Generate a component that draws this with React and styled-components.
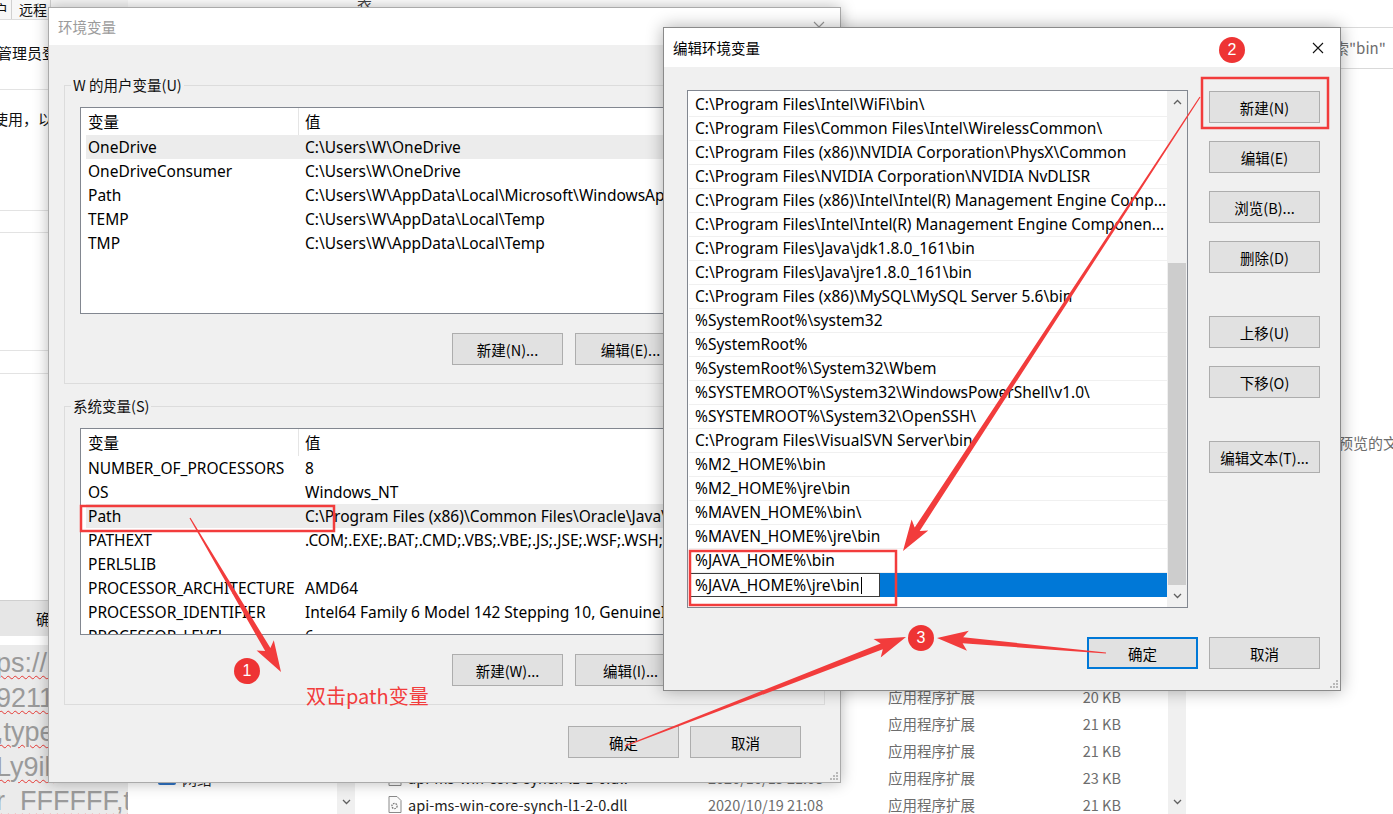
import React from 'react';
import styled, { createGlobalStyle } from 'styled-components';

const UI = '"Noto Sans", "Noto Sans CJK SC", sans-serif';
const CJK = '"Noto Sans CJK SC", "Noto Sans", sans-serif';

const GlobalStyle = createGlobalStyle`
  html, body { margin: 0; padding: 0; overflow: hidden; background: #fff; }
  body { font-family: ${UI}; font-size: 15.5px; color: #000; }
  * { box-sizing: border-box; }
`;

const userVars = [
  ['OneDrive', 'C:\\Users\\W\\OneDrive'],
  ['OneDriveConsumer', 'C:\\Users\\W\\OneDrive'],
  ['Path', 'C:\\Users\\W\\AppData\\Local\\Microsoft\\WindowsApps;'],
  ['TEMP', 'C:\\Users\\W\\AppData\\Local\\Temp'],
  ['TMP', 'C:\\Users\\W\\AppData\\Local\\Temp'],
];

const sysVars = [
  ['NUMBER_OF_PROCESSORS', '8'],
  ['OS', 'Windows_NT'],
  ['Path', 'C:\\Program Files (x86)\\Common Files\\Oracle\\Java\\javapath;'],
  ['PATHEXT', '.COM;.EXE;.BAT;.CMD;.VBS;.VBE;.JS;.JSE;.WSF;.WSH;.MSC'],
  ['PERL5LIB', ''],
  ['PROCESSOR_ARCHITECTURE', 'AMD64'],
  ['PROCESSOR_IDENTIFIER', 'Intel64 Family 6 Model 142 Stepping 10, GenuineIntel'],
  ['PROCESSOR_LEVEL', '6'],
];

const paths = [
  'C:\\Program Files\\Intel\\WiFi\\bin\\',
  'C:\\Program Files\\Common Files\\Intel\\WirelessCommon\\',
  'C:\\Program Files (x86)\\NVIDIA Corporation\\PhysX\\Common',
  'C:\\Program Files\\NVIDIA Corporation\\NVIDIA NvDLISR',
  'C:\\Program Files (x86)\\Intel\\Intel(R) Management Engine Comp...',
  'C:\\Program Files\\Intel\\Intel(R) Management Engine Componen...',
  'C:\\Program Files\\Java\\jdk1.8.0_161\\bin',
  'C:\\Program Files\\Java\\jre1.8.0_161\\bin',
  'C:\\Program Files (x86)\\MySQL\\MySQL Server 5.6\\bin',
  '%SystemRoot%\\system32',
  '%SystemRoot%',
  '%SystemRoot%\\System32\\Wbem',
  '%SYSTEMROOT%\\System32\\WindowsPowerShell\\v1.0\\',
  '%SYSTEMROOT%\\System32\\OpenSSH\\',
  'C:\\Program Files\\VisualSVN Server\\bin',
  '%M2_HOME%\\bin',
  '%M2_HOME%\\jre\\bin',
  '%MAVEN_HOME%\\bin\\',
  '%MAVEN_HOME%\\jre\\bin',
  '%JAVA_HOME%\\bin',
];

const files = [
  { name: '', date: '', size: '20 KB' },
  { name: '', date: '', size: '21 KB' },
  { name: '', date: '', size: '21 KB' },
  { name: 'api-ms-win-core-synch-l1-1-0.dll', date: '2020/10/19 21:08', size: '23 KB' },
  { name: 'api-ms-win-core-synch-l1-2-0.dll', date: '2020/10/19 21:08', size: '21 KB' },
];

const pads = ['ps://im', '92117', ',type', 'Ly9ib', 'r_FFFFFF,t_7'];

function CloseIcon({ color }) {
  return (
    <svg width="12" height="12" viewBox="0 0 12 12">
      <path d="M1 1L11 11M11 1L1 11" stroke={color} strokeWidth="1.1" fill="none" />
    </svg>
  );
}

function Chevron({ up }) {
  return (
    <svg width="9" height="6" viewBox="0 0 9 6">
      <path d={up ? 'M1 5L4.5 1.5L8 5' : 'M1 1L4.5 4.5L8 1'} stroke="#606060" strokeWidth="1.3" fill="none" />
    </svg>
  );
}

function Grip() {
  return (
    <svg width="10" height="10" viewBox="0 0 10 10">
      {[[8, 2], [8, 5], [5, 5], [8, 8], [5, 8], [2, 8]].map(([x, y]) => (
        <rect key={`${x}${y}`} x={x - 1} y={y - 1} width="2" height="2" fill="#b8b8b8" />
      ))}
    </svg>
  );
}

function DllIcon() {
  return (
    <svg width="14" height="17" viewBox="0 0 14 17">
      <path d="M1 .5h8l4 4v12H1z" fill="#fafafa" stroke="#8a8a8a" />
      <circle cx="6.5" cy="10" r="2.6" fill="none" stroke="#7a7a7a" strokeWidth="1.3" strokeDasharray="1.6 1" />
    </svg>
  );
}

function arrow(x1, y1, x2, y2, tail = 0.6, neck = 3, headW = 10, headL = 26) {
  const len = Math.hypot(x2 - x1, y2 - y1);
  const dx = (x2 - x1) / len;
  const dy = (y2 - y1) / len;
  const nx = -dy;
  const ny = dx;
  const Nx = x2 - dx * headL;
  const Ny = y2 - dy * headL;
  const pts = [
    [x1 + nx * tail, y1 + ny * tail],
    [Nx + nx * neck, Ny + ny * neck],
    [Nx - dx * 5 + nx * headW, Ny - dy * 5 + ny * headW],
    [x2, y2],
    [Nx - dx * 5 - nx * headW, Ny - dy * 5 - ny * headW],
    [Nx - nx * neck, Ny - ny * neck],
    [x1 - nx * tail, y1 - ny * tail],
  ];
  return pts.map((p) => p.map((v) => v.toFixed(1)).join(',')).join(' ');
}

export default function App() {
  return (
    <Scene>
      <GlobalStyle />

      <SettingsWindow>
        <TabStrip>
          <Tab $cut>户</Tab>
          <Tab>远程</Tab>
        </TabStrip>
        <SettingsText $top={22}>管理员登录</SettingsText>
        <SettingsRule $top={25} />
        <SettingsText $top={18} $indent={-7}>使用，以</SettingsText>
        <SettingsRule $top={80} />
        <SettingsRule $top={21} />
        <SettingsRule $top={117} />
        <SettingsRule $top={22} />
        <SettingsFooter>确定</SettingsFooter>
      </SettingsWindow>

      <NotePad>
        {pads.map((t) => (
          <PadLine key={t}>{t}</PadLine>
        ))}
      </NotePad>

      <Explorer>
        <ExplorerTop>
          <Ribbon>表</Ribbon>
          <SearchBox>搜索"bin"</SearchBox>
        </ExplorerTop>
        <ExplorerBody>
          <NavPane>
            <NavItem>
              <NetIcon />
              网络
            </NavItem>
            <VScroll>
              <Chevron />
            </VScroll>
          </NavPane>
          <FileList>
            {files.map((f, i) => (
              <FileRow key={i}>
                <FileName>
                  {f.name && <DllIcon />}
                  {f.name}
                </FileName>
                <FileDate>{f.date}</FileDate>
                <FileType>应用程序扩展</FileType>
                <FileSize>{f.size}</FileSize>
              </FileRow>
            ))}
          </FileList>
          <VScroll>
            <Chevron />
          </VScroll>
          <Preview>选择要预览的文件。</Preview>
        </ExplorerBody>
      </Explorer>

      <EnvDialog>
        <TitleBar $h={37}>
          <Title $inactive>环境变量</Title>
          <CloseBox $inactive>
            <CloseIcon color="#999" />
          </CloseBox>
        </TitleBar>
        <EnvBody>
          <Group $first>
            <Legend>W 的用户变量(U)</Legend>
            <VarList>
              <VarHeader>
                <NameCol>变量</NameCol>
                <ValueCol $head>值</ValueCol>
              </VarHeader>
              {userVars.map(([n, v], i) => (
                <VarRow key={n} $sel={i === 0}>
                  <NameCol>{n}</NameCol>
                  <ValueCol>{v}</ValueCol>
                </VarRow>
              ))}
            </VarList>
            <ButtonRow>
              <Button>新建(N)...</Button>
              <Button>编辑(E)...</Button>
              <Button>删除(D)</Button>
            </ButtonRow>
          </Group>
          <Group>
            <Legend>系统变量(S)</Legend>
            <VarList>
              <VarHeader>
                <NameCol>变量</NameCol>
                <ValueCol $head>值</ValueCol>
              </VarHeader>
              {sysVars.map(([n, v]) => (
                <VarRow key={n} $sel={n === 'Path'}>
                  <NameCol>{n}</NameCol>
                  <ValueCol>{v}</ValueCol>
                </VarRow>
              ))}
            </VarList>
            <ButtonRow>
              <Button>新建(W)...</Button>
              <Button>编辑(I)...</Button>
              <Button>删除(L)</Button>
            </ButtonRow>
          </Group>
          <DialogFooter $right={24} $top={21}>
            <Button>确定</Button>
            <Button>取消</Button>
          </DialogFooter>
        </EnvBody>
        <GripCorner>
          <Grip />
        </GripCorner>
      </EnvDialog>

      <EditDialog>
        <TitleBar $h={39}>
          <Title>编辑环境变量</Title>
          <CloseBox>
            <CloseIcon color="#111" />
          </CloseBox>
        </TitleBar>
        <EditBody>
          <EditMain>
            <PathList>
              <PathRows>
                {paths.map((p) => (
                  <PathRow key={p}>{p}</PathRow>
                ))}
                <PathRow $sel>
                  <EditField>
                    %JAVA_HOME%\jre\bin
                    <Caret />
                  </EditField>
                </PathRow>
              </PathRows>
              <ListScroll>
                <ScrollArrow>
                  <Chevron up />
                </ScrollArrow>
                <ScrollTrack>
                  <ScrollThumb />
                </ScrollTrack>
                <ScrollArrow>
                  <Chevron />
                </ScrollArrow>
              </ListScroll>
            </PathList>
            <SideButtons>
              <Button>新建(N)</Button>
              <Button>编辑(E)</Button>
              <Button>浏览(B)...</Button>
              <Button>删除(D)</Button>
              <Button $gap>上移(U)</Button>
              <Button>下移(O)</Button>
              <Button $gap>编辑文本(T)...</Button>
            </SideButtons>
          </EditMain>
          <DialogFooter $right={0} $top={29}>
            <Button $default>确定</Button>
            <Button>取消</Button>
          </DialogFooter>
        </EditBody>
        <GripCorner>
          <Grip />
        </GripCorner>
      </EditDialog>

      <Annotations viewBox="0 0 1393 814">
        <rect x="81" y="506" width="253" height="25" fill="none" stroke="#f23c3c" strokeWidth="2.5" />
        <rect x="1202" y="78" width="126" height="50" fill="none" stroke="#f23c3c" strokeWidth="2.5" />
        <rect x="690" y="551" width="206" height="54" fill="none" stroke="#f23c3c" strokeWidth="2.5" />
        <polygon points={arrow(190, 518, 281, 672)} fill="#f23c3c" />
        <polygon points={arrow(1200, 97, 903, 551)} fill="#f23c3c" />
        <polygon points={arrow(625, 746, 906, 637)} fill="#f23c3c" />
        <polygon points={arrow(1106, 653, 937, 638)} fill="#f23c3c" />
      </Annotations>
      <Badge $x={247} $y={671}>1</Badge>
      <Badge $x={1232} $y={50}>2</Badge>
      <Badge $x={921} $y={638}>3</Badge>
      <Note>双击path变量</Note>
    </Scene>
  );
}

const Scene = styled.div`
  position: relative;
  width: 1393px;
  height: 814px;
  overflow: hidden;
  background: #fff;
`;

/* ---------- background windows ---------- */

const SettingsWindow = styled.div`
  position: absolute;
  left: 0;
  top: 0;
  width: 200px;
  height: 645px;
  background: #fff;
  display: flex;
  flex-direction: column;
  font-family: ${CJK};
`;

const TabStrip = styled.div`
  display: flex;
  height: 20px;
  background: #f7f7f7;
  border-bottom: 1px solid #dcdcdc;
`;

const Tab = styled.div`
  font-size: 14px;
  line-height: 19px;
  padding: 0 3px 0 7px;
  margin-left: ${(p) => (p.$cut ? '-13px' : '0')};
  border-right: 1px solid #d0d0d0;
  color: #111;
`;

const SettingsText = styled.div`
  margin-top: ${(p) => p.$top}px;
  margin-left: ${(p) => p.$indent || -3}px;
  font-size: 15px;
  line-height: 22px;
  color: #111;
  white-space: nowrap;
`;

const SettingsRule = styled.div`
  margin-top: ${(p) => p.$top}px;
  height: 1px;
  background: #e3e3e3;
`;

const SettingsFooter = styled.div`
  margin-top: auto;
  margin-bottom: 9px;
  height: 36px;
  background: #e6e6e6;
  border-top: 1px solid #d0d0d0;
  padding-left: 36px;
  line-height: 36px;
  font-size: 15px;
  color: #111;
`;

const NotePad = styled.div`
  position: absolute;
  left: 0;
  top: 645px;
  width: 128px;
  height: 169px;
  background: #ebebeb;
  padding-top: 1px;
  overflow: hidden;
`;

const PadLine = styled.div`
  font-family: "Liberation Sans", sans-serif;
  font-size: 27px;
  line-height: 34.5px;
  color: #9a9a9a;
  white-space: nowrap;
  margin-left: -4px;
  text-decoration: underline wavy #e53935;
  text-decoration-thickness: 1px;
  text-underline-offset: 3px;
`;

const Explorer = styled.div`
  position: absolute;
  left: 128px;
  top: 0;
  width: 1265px;
  height: 814px;
  display: flex;
  flex-direction: column;
  background: #fff;
  font-family: ${CJK};
`;

const ExplorerTop = styled.div`
  height: 69px;
  display: flex;
  justify-content: space-between;
  align-items: flex-start;
`;

const Ribbon = styled.div`
  margin: -9px 0 0 229px;
  font-size: 15px;
  color: #444;
`;

const SearchBox = styled.div`
  margin-top: 27px;
  width: 110px;
  height: 42px;
  border-top: 1px solid #d9d9d9;
  border-bottom: 1px solid #d9d9d9;
  padding-left: 36px;
  line-height: 40px;
  font-size: 15px;
  color: #6d6d6d;
  white-space: nowrap;
  overflow: hidden;
`;

const ExplorerBody = styled.div`
  flex: 1;
  display: flex;
`;

const NavPane = styled.div`
  width: 227px;
  display: flex;
  justify-content: space-between;
  align-items: flex-end;
`;

const NavItem = styled.div`
  display: flex;
  align-items: center;
  gap: 6px;
  padding: 0 0 25px 30px;
  font-size: 15px;
  color: #222;
`;

const NetIcon = styled.span`
  width: 18px;
  height: 12px;
  border-radius: 2px;
  background: linear-gradient(#5aa0e6, #2b6fc0);
`;

const VScroll = styled.div`
  width: 18px;
  align-self: stretch;
  background: #f0f0f0;
  display: flex;
  align-items: flex-end;
  justify-content: center;
  padding-bottom: 9px;
`;

const FileList = styled.div`
  width: 813px;
  display: flex;
  flex-direction: column;
  justify-content: flex-end;
  margin-bottom: -4px;
`;

const FileRow = styled.div`
  display: flex;
  height: 27px;
  align-items: center;
  font-size: 14.5px;
  color: #6d6d6d;
`;

const FileName = styled.div`
  width: 353px;
  padding-left: 33px;
  display: flex;
  align-items: center;
  gap: 6px;
  color: #222;
  white-space: nowrap;
`;

const FileDate = styled.div`
  width: 180px;
`;

const FileType = styled.div`
  width: 170px;
`;

const FileSize = styled.div`
  width: 63px;
  text-align: right;
`;

const Preview = styled.div`
  flex: 1;
  padding: 363px 0 0 107px;
  font-size: 15px;
  color: #6d6d6d;
  white-space: nowrap;
  overflow: hidden;
`;

/* ---------- dialogs ---------- */

const EnvDialog = styled.div`
  position: absolute;
  left: 48px;
  top: 7px;
  width: 793px;
  height: 776px;
  background: #f0f0f0;
  border: 1px solid #aaaaaa;
  box-shadow: 0 0 14px rgba(0, 0, 0, 0.28);
  display: flex;
  flex-direction: column;
`;

const EditDialog = styled.div`
  position: absolute;
  left: 663px;
  top: 27px;
  width: 678px;
  height: 664px;
  background: #f0f0f0;
  border: 1px solid #8a8a8a;
  box-shadow: 0 0 16px rgba(0, 0, 0, 0.32);
  display: flex;
  flex-direction: column;
`;

const TitleBar = styled.div`
  height: ${(p) => p.$h}px;
  flex: none;
  background: #fff;
  display: flex;
  align-items: center;
  justify-content: space-between;
`;

const Title = styled.div`
  padding-left: 9px;
  font-family: ${CJK};
  font-size: 14.5px;
  color: ${(p) => (p.$inactive ? '#9b9b9b' : '#000')};
`;

const CloseBox = styled.div`
  width: 46px;
  height: 100%;
  display: flex;
  align-items: center;
  justify-content: center;
  margin-right: ${(p) => (p.$inactive ? '-2px' : '-1px')};
`;

const EnvBody = styled.div`
  flex: 1;
  padding: 0 15px;
  display: flex;
  flex-direction: column;
`;

const Group = styled.fieldset`
  margin: ${(p) => (p.$first ? '30px' : '12px')} 0 0;
  padding: 0 15px 18px;
  border: 1px solid #dcdcdc;
  min-width: 0;
`;

const Legend = styled.legend`
  margin-left: -9px;
  padding: 0 2px;
  font-family: ${CJK};
  font-size: 14.5px;
  line-height: 20px;
  color: #111;
`;

const VarList = styled.div`
  margin-top: 12px;
  height: 207px;
  background: #fff;
  border: 1px solid #828790;
  padding-left: 5px;
  overflow: hidden;
`;

const VarHeader = styled.div`
  display: flex;
  height: 27px;
  align-items: center;
`;

const VarRow = styled.div`
  display: flex;
  height: 24px;
  align-items: center;
  background: ${(p) => (p.$sel ? '#ececec' : 'transparent')};
`;

const NameCol = styled.div`
  width: 212px;
  flex: none;
  padding-left: 2px;
  white-space: nowrap;
  overflow: hidden;
`;

const ValueCol = styled.div`
  flex: 1;
  padding-left: 6px;
  white-space: nowrap;
  overflow: hidden;
  align-self: stretch;
  display: flex;
  align-items: center;
  border-left: ${(p) => (p.$head ? '1px solid #e5e5e5' : '1px solid transparent')};
`;

const ButtonRow = styled.div`
  display: flex;
  justify-content: flex-end;
  gap: 12px;
  margin-top: 19px;
`;

const Button = styled.div`
  width: 111px;
  height: 32px;
  flex: none;
  background: #e1e1e1;
  border: ${(p) => (p.$default ? '2px solid #0078d7' : '1px solid #adadad')};
  display: flex;
  align-items: center;
  justify-content: center;
  font-family: ${CJK};
  font-size: 14.5px;
  color: #000;
  margin-top: ${(p) => (p.$gap ? '25px' : '0')};
`;

const DialogFooter = styled.div`
  display: flex;
  justify-content: flex-end;
  gap: 11px;
  margin-top: ${(p) => p.$top}px;
  padding-right: ${(p) => p.$right}px;
`;

const GripCorner = styled.div`
  position: absolute;
  right: 1px;
  bottom: 1px;
  line-height: 0;
`;

const EditBody = styled.div`
  flex: 1;
  padding: 23px 20px 0 23px;
  display: flex;
  flex-direction: column;
`;

const EditMain = styled.div`
  display: flex;
  gap: 21px;
`;

const PathList = styled.div`
  width: 503px;
  height: 518px;
  background: #fff;
  border: 1px solid #828790;
  display: flex;
  overflow: hidden;
`;

const PathRows = styled.div`
  flex: 1;
  padding: 2px 0 0 1px;
  display: flex;
  flex-direction: column;
`;

const PathRow = styled.div`
  height: 24px;
  flex: none;
  padding-left: 6px;
  line-height: 23px;
  border-bottom: 1px solid #f0f0f0;
  white-space: nowrap;
  overflow: hidden;
  background: ${(p) => (p.$sel ? '#0078d7' : 'transparent')};
  ${(p) => p.$sel && 'padding-left: 0; border-bottom: 0;'}
`;

const EditField = styled.div`
  width: 191px;
  height: 24px;
  background: #fff;
  border: 1px solid #3c3c3c;
  padding-left: 5px;
  line-height: 22px;
  display: flex;
  align-items: center;
`;

const Caret = styled.span`
  width: 1px;
  height: 17px;
  background: #000;
  margin-left: 1px;
`;

const ListScroll = styled.div`
  width: 20px;
  flex: none;
  background: #f0f0f0;
  display: flex;
  flex-direction: column;
  padding: 0 1px;
`;

const ScrollArrow = styled.div`
  height: 22px;
  display: flex;
  align-items: center;
  justify-content: center;
`;

const ScrollTrack = styled.div`
  flex: 1;
  display: flex;
  flex-direction: column;
  justify-content: flex-end;
`;

const ScrollThumb = styled.div`
  height: 322px;
  background: #cdcdcd;
`;

const SideButtons = styled.div`
  display: flex;
  flex-direction: column;
  gap: 18px;
  padding-top: 1px;
`;

/* ---------- annotations ---------- */

const Annotations = styled.svg`
  position: absolute;
  left: 0;
  top: 0;
  width: 1393px;
  height: 814px;
  pointer-events: none;
`;

const Badge = styled.div`
  position: absolute;
  left: ${(p) => p.$x - 13}px;
  top: ${(p) => p.$y - 13}px;
  width: 26px;
  height: 26px;
  border-radius: 50%;
  background: #ee3434;
  color: #fff;
  font-family: "Liberation Sans", sans-serif;
  font-size: 16px;
  line-height: 26px;
  text-align: center;
`;

const Note = styled.div`
  position: absolute;
  left: 306px;
  top: 683px;
  font-family: ${CJK};
  font-size: 20px;
  line-height: 26px;
  color: #f23c3c;
`;
